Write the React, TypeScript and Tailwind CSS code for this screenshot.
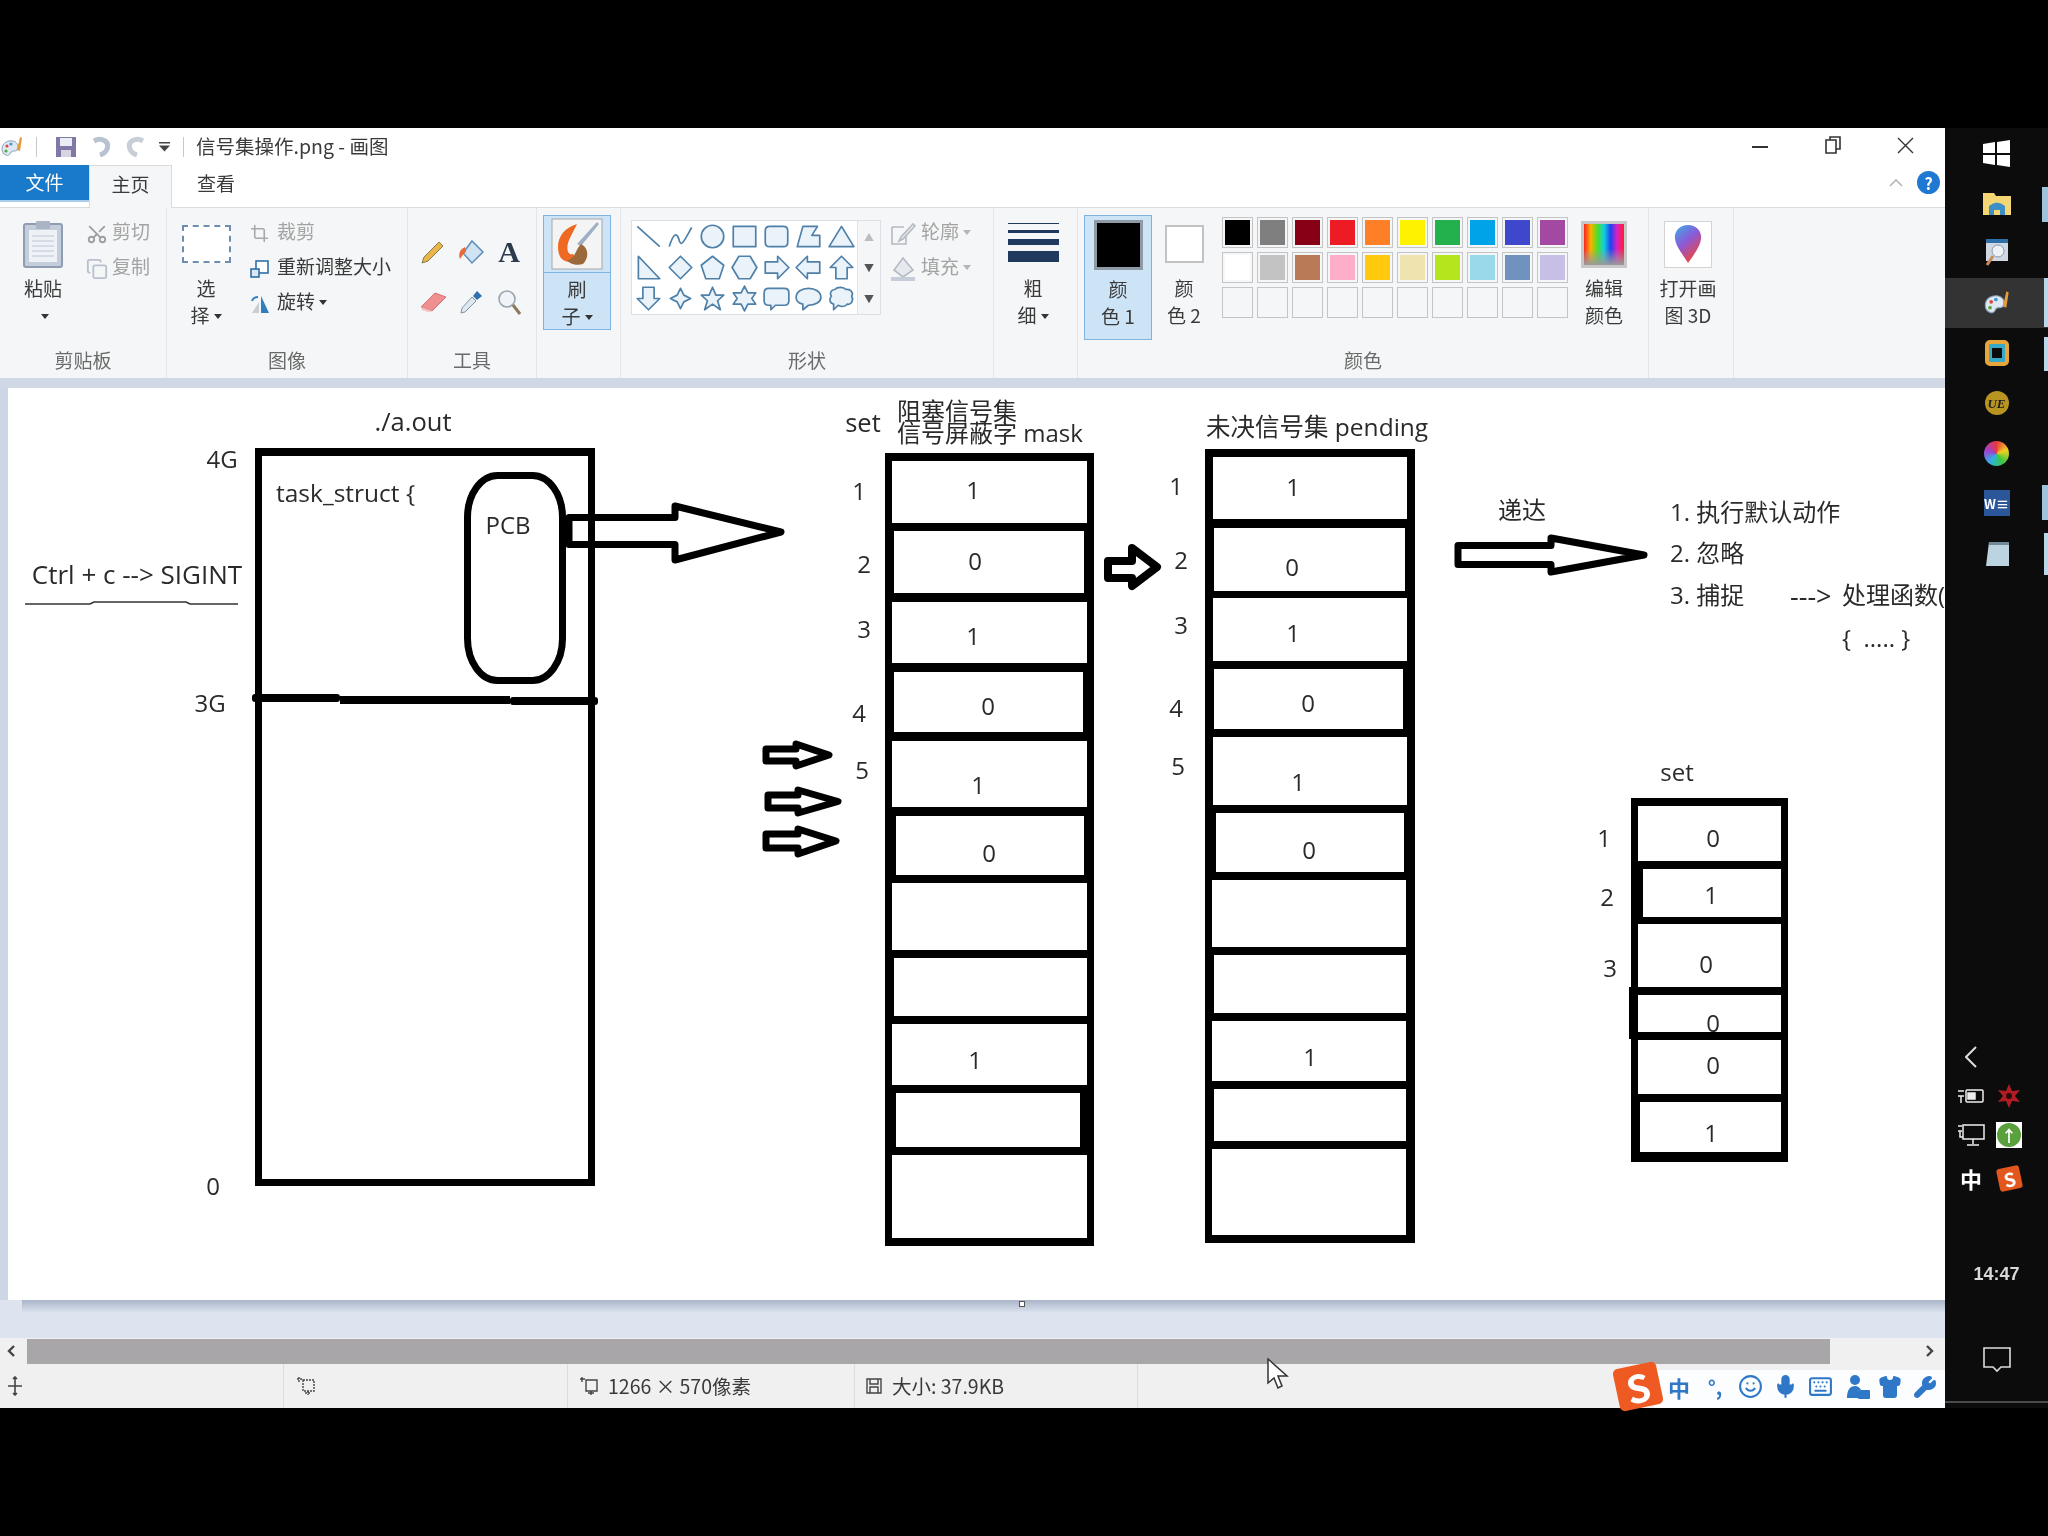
import { ReactNode } from "react";
import { Copy, Crop, Keyboard, Mic, Scissors, Shirt, Smile, Wrench } from "lucide-react";

const shapes = [
  "M2 3L22 21",
  "M2 21C6 8 9 8 11 16C13 22 16 14 22 4",
  "M12 2A10 10 0 1 0 12 22A10 10 0 1 0 12 2Z",
  "M2 3H22V21H2Z",
  "M6 3H18Q22 3 22 7V17Q22 21 18 21H6Q2 21 2 17V7Q2 3 6 3Z",
  "M2 21L7 3H20L15 11H22V21Z",
  "M12 3L23 21H1Z",
  "M3 2L22 22H3Z",
  "M12 2L22 12L12 22L2 12Z",
  "M12 2L22 10L18 22H6L2 10Z",
  "M7 2H17L23 12L17 22H7L1 12Z",
  "M2 7H13V2L23 12L13 22V17H2Z",
  "M22 7H11V2L1 12L11 22V17H22Z",
  "M7 22V12H2L12 2L22 12H17V22Z",
  "M7 2V12H2L12 22L22 12H17V2Z",
  "M12 3L15 9L21 12L15 15L12 21L9 15L3 12L9 9Z",
  "M12 2L15 9L22 9L16.5 14L19 22L12 17L5 22L7.5 14L2 9L9 9Z",
  "M12 1L15 7H22L18.5 12L22 17H15L12 23L9 17H2L5.5 12L2 7H9Z",
  "M5 3H19Q23 3 23 7V14Q23 18 19 18H11L7 22V18H5Q1 18 1 14V7Q1 3 5 3Z",
  "M12 3C18 3 23 6 23 11C23 15 18 18 12 18L7 22V17C3 16 1 14 1 11C1 6 6 3 12 3Z",
  "M6 4C9 1 14 2 16 4C20 3 23 7 21 10C23 13 21 18 17 17C15 20 11 19 9 18L5 22V17C1 16 1 12 3 10C1 7 3 4 6 4Z",
];

const paletteTop = ["bg-[#000000]", "bg-[#7f7f7f]", "bg-[#880015]", "bg-[#ed1c24]", "bg-[#ff7f27]", "bg-[#fff200]", "bg-[#22b14c]", "bg-[#00a2e8]", "bg-[#3f48cc]", "bg-[#a349a4]"];
const paletteMid = ["bg-[#ffffff]", "bg-[#c3c3c3]", "bg-[#b97a57]", "bg-[#ffaec9]", "bg-[#ffc90e]", "bg-[#efe4b0]", "bg-[#b5e61d]", "bg-[#99d9ea]", "bg-[#7092be]", "bg-[#c8bfe7]"];

const maskCells = [
  "ml-[7px] w-[195px] mt-[8px] h-[62px]",
  "ml-[9px] w-[190px] mt-[8px] h-[62px]",
  "ml-[7px] w-[195px] mt-[9px] h-[61px]",
  "ml-[9px] w-[189px] mt-[9px] h-[60px]",
  "ml-[7px] w-[195px] mt-[9px] h-[66px]",
  "ml-[11px] w-[188px] mt-[9px] h-[59px]",
  "ml-[7px] w-[195px] mt-[8px] h-[67px]",
  "ml-[9px] w-[193px] mt-[8px] h-[58px]",
  "ml-[7px] w-[195px] mt-[8px] h-[61px]",
  "ml-[11px] w-[184px] mt-[8px] h-[54px]",
  "ml-[7px] w-[195px] mt-[8px] h-[83px]",
];

const pendingCells = [
  "ml-[8px] w-[194px] mt-[8px] h-[62px]",
  "ml-[9px] w-[191px] mt-[9px] h-[63px]",
  "ml-[8px] w-[194px] mt-[7px] h-[63px]",
  "ml-[9px] w-[189px] mt-[8px] h-[60px]",
  "ml-[8px] w-[194px] mt-[8px] h-[68px]",
  "ml-[11px] w-[188px] mt-[8px] h-[59px]",
  "ml-[7px] w-[194px] mt-[8px] h-[67px]",
  "ml-[9px] w-[192px] mt-[8px] h-[58px]",
  "ml-[7px] w-[194px] mt-[8px] h-[60px]",
  "ml-[9px] w-[192px] mt-[8px] h-[52px]",
  "ml-[7px] w-[194px] mt-[8px] h-[86px]",
];

const setCells = [
  "ml-[7px] w-[143px] mt-[8px] h-[55px]",
  "ml-[12px] w-[138px] mt-[8px] h-[48px]",
  "ml-[7px] w-[143px] mt-[7px] h-[63px]",
  "ml-[7px] w-[143px] mt-[8px] h-[37px]",
  "ml-[7px] w-[143px] mt-[8px] h-[54px]",
  "ml-[9px] w-[141px] mt-[8px] h-[50px]",
];

// centred labels on the paint canvas
const labels = [
  { t: "./a.out", c: "left-[413px] top-[34px] text-[25.5px]" },
  { t: "4G", c: "left-[222px] top-[71px]" },
  { t: "PCB", c: "left-[508px] top-[137px]" },
  { t: "Ctrl + c --> SIGINT", c: "left-[137px] top-[186px] text-[26px]" },
  { t: "3G", c: "left-[210px] top-[315px]" },
  { t: "0", c: "left-[213px] top-[798px]" },
  { t: "set", c: "left-[863px] top-[35px] text-[25.5px]" },
  { t: "递达", c: "left-[1522px] top-[122px]" },
  { t: "set", c: "left-[1677px] top-[384px]" },
  { t: "1", c: "left-[973px] top-[102px]" },
  { t: "0", c: "left-[975px] top-[173px]" },
  { t: "1", c: "left-[973px] top-[248px]" },
  { t: "0", c: "left-[988px] top-[318px]" },
  { t: "1", c: "left-[978px] top-[397px]" },
  { t: "0", c: "left-[989px] top-[465px]" },
  { t: "1", c: "left-[975px] top-[672px]" },
  { t: "1", c: "left-[1293px] top-[99px]" },
  { t: "0", c: "left-[1292px] top-[179px]" },
  { t: "1", c: "left-[1293px] top-[245px]" },
  { t: "0", c: "left-[1308px] top-[315px]" },
  { t: "1", c: "left-[1298px] top-[394px]" },
  { t: "0", c: "left-[1309px] top-[462px]" },
  { t: "1", c: "left-[1310px] top-[669px]" },
  { t: "1", c: "left-[859px] top-[103px]" },
  { t: "2", c: "left-[864px] top-[176px]" },
  { t: "3", c: "left-[864px] top-[241px]" },
  { t: "4", c: "left-[859px] top-[325px]" },
  { t: "5", c: "left-[862px] top-[382px]" },
  { t: "1", c: "left-[1176px] top-[98px]" },
  { t: "2", c: "left-[1181px] top-[172px]" },
  { t: "3", c: "left-[1181px] top-[237px]" },
  { t: "4", c: "left-[1176px] top-[320px]" },
  { t: "5", c: "left-[1178px] top-[378px]" },
  { t: "0", c: "left-[1713px] top-[450px]" },
  { t: "1", c: "left-[1711px] top-[507px]" },
  { t: "0", c: "left-[1706px] top-[576px]" },
  { t: "0", c: "left-[1713px] top-[635px]" },
  { t: "0", c: "left-[1713px] top-[677px]" },
  { t: "1", c: "left-[1711px] top-[745px]" },
  { t: "1", c: "left-[1604px] top-[450px]" },
  { t: "2", c: "left-[1607px] top-[509px]" },
  { t: "3", c: "left-[1610px] top-[580px]" },
];

// left aligned labels on the paint canvas
const leftLabels = [
  { t: "task_struct {", c: "left-[276px] top-[105px] text-[24.5px]" },
  { t: "阻塞信号集", c: "left-[897px] top-[23px]" },
  { t: "信号屏蔽字 mask", c: "left-[897px] top-[45px]" },
  { t: "未决信号集 pending", c: "left-[1206px] top-[39px] text-[24.5px]" },
  { t: "1. 执行默认动作", c: "left-[1670px] top-[124px]" },
  { t: "2. 忽略", c: "left-[1670px] top-[165px]" },
  { t: "3. 捕捉", c: "left-[1670px] top-[207px]" },
  { t: "--->", c: "left-[1790px] top-[207px] text-[27px]" },
  { t: "处理函数(", c: "left-[1842px] top-[207px]" },
  { t: "{  ..... }", c: "left-[1842px] top-[250px]" },
];

const Caret = ({ light }: { light?: boolean }) => (
  <svg width="8" height="5" viewBox="0 0 8 5" className="inline-block ml-1 mb-[2px]">
    <path d="M0 0H8L4 5Z" fill={light ? "#b5b5b5" : "#333"} />
  </svg>
);

const Group = ({ width, label, children }: { width: string; label?: string; children: ReactNode }) => (
  <div className={`${width} flex flex-col border-r border-[#e3e5e8]`}>
    <div className="flex h-[139px]">{children}</div>
    <div className="flex h-[32px] items-center justify-center pb-[3px] text-[19px] text-[#6a6a6a]">{label}</div>
  </div>
);

const BigButton = ({ width, icon, l1, l2, dim }: { width: string; icon: ReactNode; l1: ReactNode; l2: ReactNode; dim?: boolean }) => (
  <div className={`${width} flex shrink-0 flex-col items-center pt-[6px]`}>
    <div className="flex h-[60px] items-center justify-center">{icon}</div>
    <div className={`text-center text-[19px] leading-[27px] ${dim ? "text-[#555]" : "text-[#3a3a3a]"}`}>
      <div>{l1}</div>
      <div>{l2}</div>
    </div>
  </div>
);

const SmallRow = ({ icon, text, width, dim, caret }: { icon: ReactNode; text: string; width: string; dim?: boolean; caret?: boolean }) => (
  <div className={`flex h-[35px] items-center text-[19px] ${dim ? "text-[#a3a3a3]" : "text-[#3a3a3a]"}`}>
    <div className={`${width} flex shrink-0 items-center`}>{icon}</div>
    <span className="mb-[4px]">{text}</span>
    {caret && <Caret light={dim} />}
  </div>
);

const PaintIcon = ({ size }: { size: number }) => (
  <svg width={size} height={size} viewBox="0 0 24 24">
    <path d="M2 14C2 8 8 5 13 6C18 7 19 12 17 15C15 17 13 15 11 17C10 20 8 21 6 20C3 19 2 17 2 14Z" fill="#dfe9f2" stroke="#8aa3b8" />
    <circle cx="7" cy="11" r="1.6" fill="#e0483a" />
    <circle cx="11" cy="9" r="1.6" fill="#3c9ad8" />
    <circle cx="6" cy="16" r="1.6" fill="#56a845" />
    <path d="M20 2L22 3L20 16L17 15Z" fill="#e59a3c" />
  </svg>
);

const Stack = ({ pos, cells }: { pos: string; cells: string[] }) => (
  <div className={`absolute ${pos} bg-black`}>
    {cells.map((c, i) => (
      <div key={i} className={`${c} bg-white`} />
    ))}
  </div>
);

const Ribbon = () => (
  <div className="flex h-[171px] bg-[#f5f6f7] border-t border-[#dadbdc]">
    <Group width="w-[167px]" label="剪贴板">
      <BigButton
        width="w-[86px]"
        l1="粘贴"
        l2={<Caret />}
        icon={
          <svg width="40" height="48" viewBox="0 0 40 48">
            <rect x="1" y="4" width="38" height="43" rx="2" fill="#c3cddb" stroke="#8f9db3" strokeWidth="2" />
            <rect x="6" y="10" width="28" height="32" fill="#eef1f5" />
            <path d="M9 16H31M9 21H31M9 26H31M9 31H31M9 36H31" stroke="#bcc6d4" />
            <rect x="13" y="1" width="14" height="8" rx="1" fill="#aab4c4" />
          </svg>
        }
      />
      <div className="flex flex-col pt-[8px]">
        <SmallRow dim width="w-[26px]" text="剪切" icon={<Scissors size={22} className="-rotate-90 text-[#a0a0a0]" />} />
        <SmallRow dim width="w-[26px]" text="复制" icon={<Copy size={22} className="text-[#b9c1cc]" />} />
      </div>
    </Group>
    <Group width="w-[241px]" label="图像">
      <BigButton
        width="w-[78px]"
        l1="选"
        l2={<>择<Caret /></>}
        icon={<div className="h-[38px] w-[49px] border-2 border-dashed border-[#6f8db0] bg-white" />}
      />
      <div className="ml-[5px] flex flex-col pt-[8px]">
        <SmallRow dim width="w-[27px]" text="裁剪" icon={<Crop size={19} className="text-[#a9a9a9]" />} />
        <SmallRow
          width="w-[27px]"
          text="重新调整大小"
          icon={
            <svg width="20" height="20" viewBox="0 0 20 20" fill="none" stroke="#2f6fa8" strokeWidth="1.6">
              <rect x="6" y="2" width="12" height="12" fill="#fff" />
              <rect x="1" y="10" width="8" height="8" fill="#dbe8f4" />
            </svg>
          }
        />
        <SmallRow
          caret
          width="w-[27px]"
          text="旋转"
          icon={
            <svg width="22" height="20" viewBox="0 0 22 20">
              <path d="M11 2L19 19H11Z" fill="#2f7fc0" />
              <path d="M9 8L2 19H9Z" fill="#c9ced4" />
              <path d="M2 7C3 4 5 3 8 3" stroke="#2f7fc0" strokeWidth="2" fill="none" />
            </svg>
          }
        />
      </div>
    </Group>
    <Group width="w-[129px]" label="工具">
      <div className="grid h-[100px] grid-cols-[38px_38px_38px] grid-rows-[50px_50px] place-items-center pl-[6px] pt-[19px]">
        <svg width="24" height="24" viewBox="0 0 24 24">
          <path d="M18 2L22 6L7 21L1 23L3 17Z" fill="#e8b64a" stroke="#8c7a4a" />
        </svg>
        <svg width="28" height="26" viewBox="0 0 28 26">
          <path d="M15 2L26 13L15 24L6 14Z" fill="#cfe3f3" stroke="#5e8fb8" strokeWidth="1.5" />
          <path d="M8 8C3 10 1 15 3 20C5 17 6 15 9 13Z" fill="#e8683a" />
        </svg>
        <span className="font-['Liberation_Serif',serif] text-[30px] font-bold leading-none text-[#2c3a4e]">A</span>
        <svg width="28" height="22" viewBox="0 0 28 22">
          <path d="M16 2L27 6L13 20L2 16Z" fill="#ef8f8f" stroke="#d97070" />
          <path d="M2 16L13 20L9 21L3 19Z" fill="#f4c1c1" />
        </svg>
        <svg width="26" height="26" viewBox="0 0 26 26">
          <path d="M19 2L24 7L19 11L15 7Z" fill="#2f6fb0" />
          <path d="M14 8L18 12L7 23L3 24L4 19Z" fill="#dfe7ef" stroke="#7f93a8" />
        </svg>
        <svg width="24" height="26" viewBox="0 0 24 26" fill="none">
          <circle cx="10" cy="10" r="8" fill="#f0f4f8" stroke="#9aa5b0" strokeWidth="1.6" />
          <path d="M16 16L23 25" stroke="#8a7a5e" strokeWidth="3" />
        </svg>
      </div>
    </Group>
    <Group width="w-[84px]">
      <div className="ml-[6px] mt-[7px] flex h-[115px] w-[68px] flex-col items-center border border-[#7fb4e0] bg-[#cde4f7]">
        <div className="flex h-[59px] w-full items-center justify-center border-b border-[#7fb4e0]">
          <svg width="52" height="52" viewBox="0 0 52 52">
            <rect x="1" y="1" width="50" height="50" fill="#f4f4f4" stroke="#a8a8a8" />
            <path d="M26 6C12 10 4 22 8 36C10 44 20 46 26 42L22 36C16 38 14 28 20 18Z" fill="#ee6a22" />
            <path d="M48 6L30 28L26 26L46 4Z" fill="#9fb0c4" />
            <path d="M30 26C38 30 38 40 32 46C26 48 18 46 16 42C24 42 24 32 30 26Z" fill="#9c6a3a" />
          </svg>
        </div>
        <div className="pt-[2px] text-center text-[19px] leading-[27px] text-[#3a3a3a]">
          <div>刷</div>
          <div>
            子<Caret />
          </div>
        </div>
      </div>
    </Group>
    <Group width="w-[373px]" label="形状">
      <div className="ml-[10px] mt-[12px] flex h-[95px] w-[250px] border border-[#dcdfe3] bg-white">
        <div className="grid w-[227px] grid-cols-7 grid-rows-3 place-items-center">
          {shapes.map((d, i) => (
            <svg key={i} width="27" height="27" viewBox="0 0 24 24">
              <path d={d} fill={i < 2 ? "none" : "#eaf2fa"} stroke="#4f80a8" strokeWidth="1.5" strokeLinejoin="round" />
            </svg>
          ))}
        </div>
        <div className="flex w-[23px] flex-col items-center justify-around border-l border-[#e2e4e7] bg-[#f5f6f7] text-[10px] leading-none text-[#555]">
          <span className="text-[#bdbdbd]">▲</span>
          <span>▼</span>
          <span>▼</span>
        </div>
      </div>
      <div className="ml-[9px] flex flex-col pt-[8px]">
        <SmallRow
          dim
          caret
          width="w-[31px]"
          text="轮廓"
          icon={
            <svg width="26" height="24" viewBox="0 0 26 24" fill="none" stroke="#b4bac2" strokeWidth="1.6">
              <path d="M2 5H14M2 5V22H16V12" />
              <path d="M23 2L11 15L9 19L13 17L25 4Z" fill="#e8eaed" />
            </svg>
          }
        />
        <SmallRow
          dim
          caret
          width="w-[31px]"
          text="填充"
          icon={
            <svg width="26" height="26" viewBox="0 0 26 26">
              <path d="M13 2L23 14L13 21L4 14Z" fill="#e6e9ee" stroke="#b4bac2" strokeWidth="1.6" />
              <rect x="1" y="21" width="24" height="4" fill="#c6cdd8" />
            </svg>
          }
        />
      </div>
    </Group>
    <Group width="w-[84px]">
      <BigButton
        width="w-[78px]"
        l1="粗"
        l2={<>细<Caret /></>}
        icon={
          <div className="flex w-[51px] flex-col gap-[6px] pb-[3px]">
            <div className="h-px bg-[#1f3a5c]" />
            <div className="h-[3px] bg-[#1f3a5c]" />
            <div className="h-[6px] bg-[#1f3a5c]" />
            <div className="h-[11px] bg-[#1f3a5c]" />
          </div>
        }
      />
    </Group>
    <Group width="w-[571px]" label="颜色">
      <div className="ml-[6px] mt-[7px] flex h-[125px] w-[68px] shrink-0 flex-col items-center border border-[#7fb4e0] bg-[#cde4f7]">
        <div className="mt-[4px] h-[50px] w-[49px] border-[3px] border-[#8f9aa6] bg-black" />
        <div className="pt-[5px] text-center text-[19px] leading-[27px] text-[#3a3a3a]">
          <div>颜</div>
          <div>色 1</div>
        </div>
      </div>
      <BigButton
        width="w-[60px] ml-[2px]"
        l1="颜"
        l2="色 2"
        icon={<div className="h-[38px] w-[39px] border-2 border-[#c2c2c2] bg-white" />}
      />
      <div className="ml-[8px] mt-[9px] flex flex-col gap-[4px]">
        {[paletteTop, paletteMid, Array(10).fill("bg-[#f5f6f7]") as string[]].map((row, r) => (
          <div key={r} className="flex gap-[4px]">
            {row.map((c, i) => (
              <div key={i} className="h-[31px] w-[31px] border border-[#c4c4c4] p-[2px]">
                <div className={`h-full w-full ${c}`} />
              </div>
            ))}
          </div>
        ))}
      </div>
      <BigButton
        width="w-[62px] ml-[5px]"
        l1="编辑"
        l2="颜色"
        icon={
          <div className="h-[47px] w-[46px] border-[3px] border-[#c8c8c8] bg-[linear-gradient(to_bottom,rgba(255,255,255,0)_60%,#9a9a9a),linear-gradient(to_right,#ff2020,#ffb000,#50e020,#10d0e0,#2040f0,#e020c0,#ff2020)]" />
        }
      />
    </Group>
    <Group width="w-[85px]">
      <BigButton
        width="w-[78px]"
        l1="打开画"
        l2="图 3D"
        icon={
          <div className="flex h-[47px] w-[48px] items-center justify-center border border-[#d3d3d3] bg-white">
            <svg width="30" height="40" viewBox="0 0 30 40">
              <defs>
                <linearGradient id="p3d" x1="0" y1="0" x2="0.6" y2="1">
                  <stop offset="0" stopColor="#3ab0e8" />
                  <stop offset="0.5" stopColor="#8a5ad8" />
                  <stop offset="1" stopColor="#f0443c" />
                </linearGradient>
              </defs>
              <path d="M15 1C24 1 29 8 28 15C27 23 20 32 15 39C11 32 3 23 2 15C1 8 6 1 15 1Z" fill="url(#p3d)" />
            </svg>
          </div>
        }
      />
    </Group>
  </div>
);

const Canvas = () => (
  <div className="relative h-[950px] overflow-hidden bg-[#dde4f0] font-['Open_Sans','Noto_Sans_CJK_SC',sans-serif] text-[24px] text-[#2a2a2a]">
    <div className="absolute left-0 top-0 h-[912px] w-[8px] bg-[#cdd6e6]" />
    <div className="ml-[8px] h-[912px] bg-white" />
    <div className="ml-[22px] h-[13px] bg-[linear-gradient(to_bottom,#a9b4c8,#dde4f0)]" />
    <div className="absolute left-[1019px] top-[913px] h-[6px] w-[6px] border border-[#555] bg-white" />

    <svg className="absolute left-0 top-0" width="1945" height="912" viewBox="0 0 1945 912" fill="none">
      <rect x="258.5" y="63.5" width="333" height="731" stroke="#000" strokeWidth="7" />
      <rect x="255" y="60" width="340" height="8" fill="#000" />
      <rect x="252" y="306" width="88" height="8" rx="3" fill="#000" />
      <rect x="340" y="308" width="170" height="8" fill="#000" />
      <rect x="510" y="309" width="88" height="8" rx="3" fill="#000" />
      <rect x="467.5" y="87.5" width="95" height="205" rx="30" ry="42" stroke="#000" strokeWidth="7" />
      <path d="M569 129.5H675V118L781 144L675 172V156.5H569Z" stroke="#000" strokeWidth="7" strokeLinejoin="round" />
      <path d="M1458 157.5H1551V150L1644 167L1551 184V176.5H1458Z" stroke="#000" strokeWidth="7" strokeLinejoin="round" />
      <path d="M1108 173H1132V160L1157 179L1132 198V190H1108Z" stroke="#000" strokeWidth="8" strokeLinejoin="round" />
      <path d="M766 361H796V356L829 367L796 378V373H766Z" stroke="#000" strokeWidth="7" strokeLinejoin="round" />
      <path d="M768 407H798V402L838 413.5L798 425V420H768Z" stroke="#000" strokeWidth="7" strokeLinejoin="round" />
      <path d="M766 446H798V441L836 453L798 466V460H766Z" stroke="#000" strokeWidth="7" strokeLinejoin="round" />
      <path d="M25 216H90L94 214H186L190 216H238" stroke="#333" strokeWidth="1.5" />
    </svg>

    <Stack pos="left-[885px] top-[65px] h-[793px] w-[209px]" cells={maskCells} />
    <Stack pos="left-[1205px] top-[61px] h-[794px] w-[210px]" cells={pendingCells} />
    <Stack pos="left-[1631px] top-[410px] h-[364px] w-[157px]" cells={setCells} />
    <div className="absolute left-[1629px] top-[599px] h-[52px] w-[9px] bg-black" />

    {labels.map((l, i) => (
      <span key={i} className={`absolute ${l.c} -translate-x-1/2 -translate-y-1/2 whitespace-nowrap leading-none`}>
        {l.t}
      </span>
    ))}
    {leftLabels.map((l, i) => (
      <span key={i} className={`absolute ${l.c} -translate-y-1/2 whitespace-pre leading-none`}>
        {l.t}
      </span>
    ))}
  </div>
);

const StatusBar = () => (
  <div className="relative flex h-[44px] bg-[#f0f0f0] text-[19.5px] text-[#3a3a3a]">
    <div className="flex w-[284px] items-center border-r border-[#dcdcdc] pl-[7px]">
      <svg width="16" height="20" viewBox="0 0 16 20" stroke="#444" strokeWidth="1.6" fill="none">
        <path d="M8 1V19M1 10H15M6 3L8 1L10 3M6 17L8 19L10 17" />
      </svg>
    </div>
    <div className="flex w-[284px] items-center border-r border-[#dcdcdc] pl-[12px]">
      <svg width="20" height="20" viewBox="0 0 20 20" stroke="#444" strokeWidth="1.4" fill="none">
        <path d="M3 1V6M1 3H6M7 4H18V15H7ZM12 15V19M9 17H15" strokeDasharray="2 1" />
      </svg>
    </div>
    <div className="flex w-[287px] items-center gap-[9px] border-r border-[#dcdcdc] pl-[11px]">
      <svg width="20" height="20" viewBox="0 0 20 20" stroke="#444" strokeWidth="1.4" fill="none">
        <path d="M3 1V6M1 3H6M7 4H18V15H7ZM12 15V19M9 17H15" />
      </svg>
      <span>1266 × 570像素</span>
    </div>
    <div className="flex w-[283px] items-center gap-[9px] border-r border-[#dcdcdc] pl-[10px]">
      <svg width="18" height="18" viewBox="0 0 18 18" stroke="#444" strokeWidth="1.4" fill="none">
        <path d="M2 2H16V16H2ZM5 2V7H13V2M5 16V10H13V16" />
      </svg>
      <span>大小: 37.9KB</span>
    </div>
    <div className="absolute bottom-0 right-0 flex h-[38px] w-[291px] items-center bg-[#fbfdff] pb-[5px] text-[#2f78c8]">
      <span className="ml-[12px] w-[26px] text-center font-bold text-[22px] leading-none">中</span>
      <span className="ml-[11px] w-[24px] text-center font-bold text-[20px] leading-none">°,</span>
      <Smile size={25} className="ml-[11px]" />
      <Mic size={25} className="ml-[10px]" fill="#2f78c8" />
      <Keyboard size={25} className="ml-[10px]" />
      <svg width="24" height="26" viewBox="0 0 24 26" className="ml-[13px]" fill="#2f78c8">
        <circle cx="9" cy="6" r="5" />
        <path d="M1 24C1 16 4 12 9 12C12 12 14 14 15 16H12V24Z" />
        <rect x="12" y="16" width="12" height="9" rx="1" />
      </svg>
      <Shirt size={24} className="ml-[8px]" fill="#2f78c8" />
      <Wrench size={24} className="ml-[11px]" fill="#2f78c8" />
    </div>
    <div className="absolute bottom-0 right-[285px] flex h-[43px] w-[44px] -rotate-12 items-center justify-center rounded-[5px] bg-[#ee5a22] text-[38px] font-bold leading-none text-white">
      S
    </div>
    {/* mouse cursor */}
    <svg className="absolute left-[1267px] top-[-6px]" width="23" height="31" viewBox="0 0 23 31">
      <path d="M1 1V25L7 20L11 30L15 28L11 18H20Z" fill="#fff" stroke="#333" strokeWidth="1.5" />
    </svg>
  </div>
);

const Sidebar = () => (
  <div className="flex flex-1 flex-col bg-[#0c0c0c] text-white">
    <div className="flex h-[50px] items-center justify-center">
      <svg width="27" height="27" viewBox="0 0 27 27" fill="#fff">
        <path d="M0 4L12 2V13H0ZM14 2L27 0V13H14ZM0 15H12V25L0 23ZM14 15H27V27L14 25Z" />
      </svg>
    </div>
    <div className="relative flex h-[50px] items-center justify-center">
      <svg width="28" height="24" viewBox="0 0 28 24">
        <path d="M0 2H11L13 5H28V24H0Z" fill="#f4d675" />
        <path d="M6 24V15Q14 8 22 15V24H17V19H11V24Z" fill="#3d8fc6" />
      </svg>
      <div className="absolute right-0 top-[9px] h-[35px] w-[6px] bg-[#9cc4dc]" />
    </div>
    <div className="flex h-[50px] items-center justify-center">
      <svg width="24" height="28" viewBox="0 0 24 28">
        <rect x="1" y="0" width="22" height="22" fill="#cfd8e2" />
        <rect x="1" y="0" width="22" height="4" fill="#2f6fa8" />
        <circle cx="13" cy="12" r="6" fill="#eef2f6" stroke="#8a9aac" />
        <path d="M8 17L2 26" stroke="#c98a5a" strokeWidth="3" />
      </svg>
    </div>
    <div className="relative flex h-[50px] items-center justify-center bg-[#333333]">
      <PaintIcon size={28} />
      <div className="absolute right-0 top-0 h-[49px] w-[4px] bg-[#b8d8ea]" />
    </div>
    <div className="relative flex h-[50px] items-center justify-center">
      <div className="flex h-[26px] w-[24px] items-center justify-center rounded-[5px] border-[4px] border-[#e8a63a] bg-[#38a8c8]">
        <div className="h-[10px] w-[10px] bg-[#0c0c0c]" />
      </div>
      <div className="absolute right-0 top-[9px] h-[34px] w-[4px] bg-[#b8d8ea]" />
    </div>
    <div className="flex h-[50px] items-center justify-center">
      <div className="flex h-[24px] w-[24px] items-center justify-center rounded-full bg-[#b89420] font-['Liberation_Serif',serif] text-[13px] font-bold italic leading-none text-[#1c1c1c]">
        UE
      </div>
    </div>
    <div className="flex h-[50px] items-center justify-center">
      <div className="h-[25px] w-[25px] rounded-full bg-[conic-gradient(#e83a3a,#f0d020,#3ac840,#30b0e8,#a040d0,#e83a3a)]" />
    </div>
    <div className="relative flex h-[50px] items-center justify-center">
      <div className="flex h-[26px] w-[26px] items-center justify-center bg-[#2b579a] text-[13px] font-bold leading-none text-white">W≡</div>
      <div className="absolute right-0 top-[7px] h-[35px] w-[6px] bg-[#9cc4dc]" />
    </div>
    <div className="relative flex h-[50px] items-center justify-center">
      <svg width="26" height="27" viewBox="0 0 26 27">
        <path d="M5 2H25V26H2Z" fill="#bcd4e0" />
        <path d="M5 2H25V5H5Z" fill="#6f8a9a" />
      </svg>
      <div className="absolute right-0 top-[5px] h-[42px] w-[4px] bg-[#b8d8ea]" />
    </div>

    <div className="mt-[459px] grid grid-cols-[50px_26px] grid-rows-[39px_39px_39px_48px] place-items-center pl-[1px]">
      <svg width="12" height="22" viewBox="0 0 12 22" fill="none" stroke="#ddd" strokeWidth="2">
        <path d="M11 1L1 11L11 21" />
      </svg>
      <div />
      <svg width="28" height="18" viewBox="0 0 28 18" fill="none" stroke="#eee" strokeWidth="1.5">
        <rect x="9" y="3" width="17" height="12" rx="1" />
        <rect x="11" y="6" width="7" height="6" fill="#eee" />
        <path d="M1 4H7M1 9H7M4 9V16" />
      </svg>
      <svg width="26" height="26" viewBox="0 0 26 26" fill="#b01c24">
        <path d="M13 1L16 8L24 7L19 13L24 19L16 18L13 25L10 18L2 19L7 13L2 7L10 8Z" />
        <circle cx="13" cy="13" r="3" fill="#2a0a0a" />
      </svg>
      <svg width="28" height="24" viewBox="0 0 28 24" fill="none" stroke="#eee" strokeWidth="1.5">
        <rect x="6" y="2" width="21" height="14" />
        <path d="M16 16V21M10 22H22M1 3H5M1 8H5M3 8V14H6" />
      </svg>
      <div className="flex h-[26px] w-[26px] items-center justify-center bg-white">
        <div className="flex h-[24px] w-[24px] items-center justify-center rounded-full bg-[#5aa03c] text-[16px] font-bold leading-none text-white">↑</div>
      </div>
      <span className="text-[22px] font-bold leading-none">中</span>
      <div className="flex h-[23px] w-[23px] rotate-[-12deg] items-center justify-center rounded-[3px] bg-[#e2571e] text-[19px] font-bold leading-none text-white">S</div>
    </div>
    <div className="mt-[63px] text-center font-['Liberation_Sans',sans-serif] text-[18px] font-bold leading-none text-[#d8d8d8]">14:47</div>
    <div className="mt-[64px] flex justify-center">
      <svg width="28" height="26" viewBox="0 0 28 26" fill="none" stroke="#ddd" strokeWidth="1.6">
        <path d="M1 1H27V20H18L14 24L10 20H1Z" />
      </svg>
    </div>
    <div className="mt-[28px] h-[2px] bg-[#4a4a4a]" />
  </div>
);

export default function App() {
  return (
    <div className="flex h-[1536px] w-[2048px] flex-col overflow-hidden bg-black font-['Noto_Sans_CJK_SC','Noto_Sans',sans-serif] blur-[0.6px]">
      <div className="h-[128px]" />
      <div className="flex h-[1280px]">
        <div className="flex w-[1945px] flex-col bg-white">
          {/* title bar */}
          <div className="flex h-[37px] items-center text-[18px] text-[#3a3a3a]">
            <PaintIcon size={24} />
            <div className="ml-[12px] h-[20px] w-px bg-[#c8c8c8]" />
            <svg width="22" height="22" viewBox="0 0 22 22" className="ml-[18px]">
              <path d="M1 1H21V21H1Z" fill="#8278a8" />
              <rect x="5" y="2" width="12" height="8" fill="#e8eef4" />
              <rect x="6" y="14" width="10" height="7" fill="#d8d4e4" />
            </svg>
            <svg width="21" height="21" viewBox="0 0 21 21" className="ml-[14px]" fill="none" stroke="#b8c2d0" strokeWidth="5">
              <path d="M3 5C10 1 19 5 16 13C15 16 12 18 9 19" />
            </svg>
            <svg width="21" height="21" viewBox="0 0 21 21" className="ml-[13px]" fill="none" stroke="#c8ced6" strokeWidth="5">
              <path d="M18 5C11 1 2 5 5 13C6 16 9 18 12 19" />
            </svg>
            <svg width="11" height="11" viewBox="0 0 11 11" className="ml-[13px]">
              <path d="M0 1H11V2.5H0ZM0 4.5H11L5.5 10.5Z" fill="#444" />
            </svg>
            <div className="ml-[13px] h-[20px] w-px bg-[#c8c8c8]" />
            <span className="ml-[12px] mb-[2px] whitespace-pre text-[19.5px] leading-none">信号集操作.png - 画图</span>
            <svg width="16" height="2" viewBox="0 0 16 2" className="ml-auto">
              <rect width="16" height="2" fill="#333" />
            </svg>
            <svg width="16" height="18" viewBox="0 0 16 18" className="ml-[57px] mb-[3px]" fill="none" stroke="#333" strokeWidth="1.6">
              <path d="M5 4V1H15V13H11M1 4H11V17H1Z" />
            </svg>
            <svg width="17" height="17" viewBox="0 0 17 17" className="ml-[56px] mr-[31px] mb-[3px]" fill="none" stroke="#333" strokeWidth="1.4">
              <path d="M1 1L16 16M16 1L1 16" />
            </svg>
          </div>
          {/* tabs */}
          <div className="flex h-[42px] text-[19px]">
            <div className="flex h-[37px] w-[89px] items-center justify-center border-b-2 border-[#a9cdea] bg-[#1979ca] text-white">文件</div>
            <div className="z-10 flex h-[43px] w-[83px] items-center justify-center border-x border-t border-[#dadbdc] bg-[#f5f6f7] pb-[5px] text-[#3a3a3a]">主页</div>
            <div className="flex h-[37px] w-[88px] items-center justify-center text-[#3a3a3a]">查看</div>
            <div className="ml-auto mr-[5px] flex h-[37px] items-center gap-[14px] pb-[2px]">
              <svg width="14" height="8" viewBox="0 0 14 8" fill="none" stroke="#b5b5b5" strokeWidth="1.6">
                <path d="M1 7L7 1L13 7" />
              </svg>
              <div className="flex h-[23px] w-[23px] items-center justify-center rounded-full bg-[#1f78d1] text-[16px] font-bold leading-none text-white">?</div>
            </div>
          </div>
          <Ribbon />
          <div className="h-[10px] bg-[#d0d8e6]" />
          <Canvas />
          {/* horizontal scrollbar */}
          <div className="flex h-[26px] items-center bg-[#f0f0f0]">
            <svg width="27" height="14" viewBox="0 0 27 14" fill="none" stroke="#444" strokeWidth="2.4">
              <path d="M14 2L9 7L14 12" />
            </svg>
            <div className="h-[25px] w-[1803px] bg-[#a8a6a8]" />
            <svg width="14" height="14" viewBox="0 0 14 14" fill="none" stroke="#444" strokeWidth="2.4" className="ml-auto mr-[8px]">
              <path d="M4 2L9 7L4 12" />
            </svg>
          </div>
          <StatusBar />
        </div>
        <Sidebar />
      </div>
      <div className="flex-1" />
    </div>
  );
}
